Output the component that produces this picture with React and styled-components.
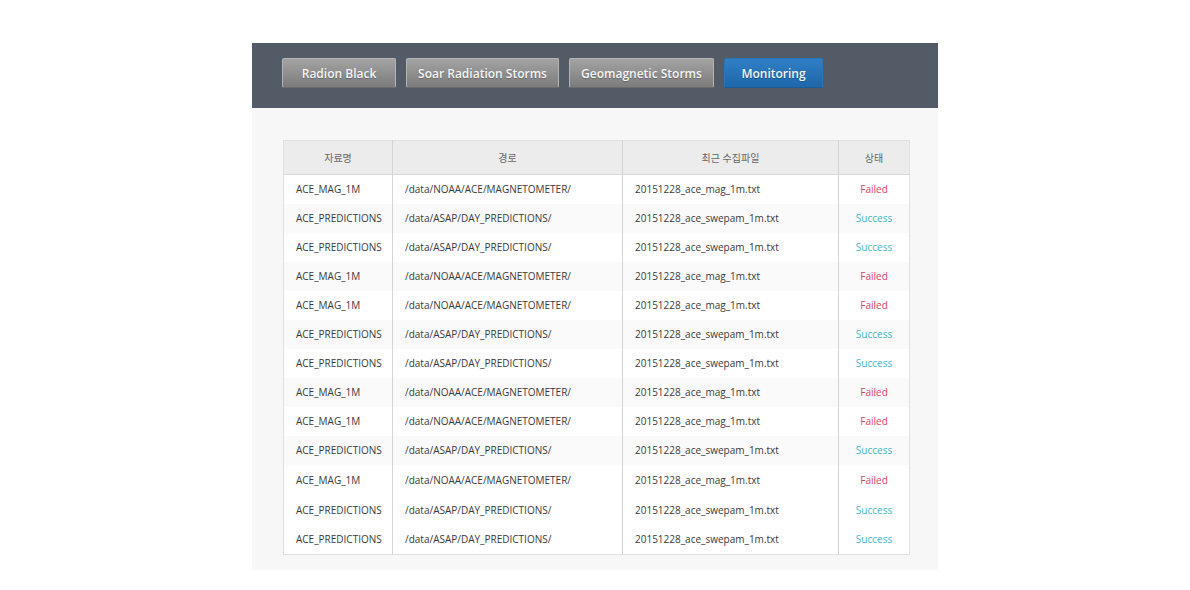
import React from 'react';
import styled, { createGlobalStyle } from 'styled-components';

const GlobalStyle = createGlobalStyle`
  body {
    margin: 0;
    background: #ffffff;
    font-family: "Open Sans", "Noto Sans CJK KR", sans-serif;
  }
`;

const rows = [
  ['ACE_MAG_1M', '/data/NOAA/ACE/MAGNETOMETER/', '20151228_ace_mag_1m.txt', 'Failed'],
  ['ACE_PREDICTIONS', '/data/ASAP/DAY_PREDICTIONS/', '20151228_ace_swepam_1m.txt', 'Success'],
  ['ACE_PREDICTIONS', '/data/ASAP/DAY_PREDICTIONS/', '20151228_ace_swepam_1m.txt', 'Success'],
  ['ACE_MAG_1M', '/data/NOAA/ACE/MAGNETOMETER/', '20151228_ace_mag_1m.txt', 'Failed'],
  ['ACE_MAG_1M', '/data/NOAA/ACE/MAGNETOMETER/', '20151228_ace_mag_1m.txt', 'Failed'],
  ['ACE_PREDICTIONS', '/data/ASAP/DAY_PREDICTIONS/', '20151228_ace_swepam_1m.txt', 'Success'],
  ['ACE_PREDICTIONS', '/data/ASAP/DAY_PREDICTIONS/', '20151228_ace_swepam_1m.txt', 'Success'],
  ['ACE_MAG_1M', '/data/NOAA/ACE/MAGNETOMETER/', '20151228_ace_mag_1m.txt', 'Failed'],
  ['ACE_MAG_1M', '/data/NOAA/ACE/MAGNETOMETER/', '20151228_ace_mag_1m.txt', 'Failed'],
  ['ACE_PREDICTIONS', '/data/ASAP/DAY_PREDICTIONS/', '20151228_ace_swepam_1m.txt', 'Success'],
  ['ACE_MAG_1M', '/data/NOAA/ACE/MAGNETOMETER/', '20151228_ace_mag_1m.txt', 'Failed'],
  ['ACE_PREDICTIONS', '/data/ASAP/DAY_PREDICTIONS/', '20151228_ace_swepam_1m.txt', 'Success'],
  ['ACE_PREDICTIONS', '/data/ASAP/DAY_PREDICTIONS/', '20151228_ace_swepam_1m.txt', 'Success'],
];

const tabs = [
  {label: 'Radion Black', width: 114},
  {label: 'Soar Radiation Storms', width: 153},
  {label: 'Geomagnetic Storms', width: 145},
  {label: 'Monitoring', width: 99, active: true},
];

export default function App() {
  return <>
    <GlobalStyle/>
    <Panel>
      <TopBar>
        {tabs.map(t => <TabBtn key={t.label} $w={t.width} $active={t.active}>{t.label}</TabBtn>)}
      </TopBar>
      <Body>
        <Table>
          <colgroup>
            <col style={{width: 109}}/>
            <col style={{width: 230}}/>
            <col style={{width: 216}}/>
            <col style={{width: 71}}/>
          </colgroup>
          <thead>
            <tr>
              <Th>자료명</Th>
              <Th>경로</Th>
              <Th>최근 수집파일</Th>
              <Th>상태</Th>
            </tr>
          </thead>
          <tbody>
            {rows.map((r, i) => <Row key={i} $tall={i >= 10}>
              <Td>{r[0]}</Td>
              <Td>{r[1]}</Td>
              <Td>{r[2]}</Td>
              <Status $ok={r[3] === 'Success'}>{r[3]}</Status>
            </Row>)}
          </tbody>
        </Table>
      </Body>
    </Panel>
  </>;
}

const Panel = styled.div`
  width: 686px;
  margin: 43px auto 0;
`;

const TopBar = styled.div`
  background: #535b66;
  height: 65px;
  box-sizing: border-box;
  padding: 15px 30px 0;
  display: flex;
  gap: 10px;
  align-items: flex-start;
`;

const TabBtn = styled.div`
  width: ${p => p.$w}px;
  height: 30px;
  box-sizing: border-box;
  display: flex;
  align-items: center;
  justify-content: center;
  white-space: nowrap;
  font-size: 12px;
  font-weight: 600;
  color: #f4f4f4;
  border-radius: 2px;
  text-shadow: 0 1px 1px rgba(0,0,0,0.25);
  background: ${p => p.$active
    ? 'linear-gradient(#2f7fc6, #1f66aa)'
    : 'linear-gradient(#a3a3a3, #7c7c7c)'};
  border: 1px solid ${p => p.$active ? '#2a74b8' : '#b4b4b4'};
  border-bottom-color: ${p => p.$active ? '#1c5c98' : '#6c6c6c'};
`;

const Body = styled.div`
  background: #f7f7f8;
  padding: 32px 28px 15px 31px;
`;

const Table = styled.table`
  width: 626px;
  border-collapse: collapse;
  table-layout: fixed;
  background: #fff;
  border: 1px solid #e0e0e0;
  font-size: 10px;
  color: #3a3a3a;
`;

const Th = styled.th`
  height: 33px;
  padding: 0;
  background: #ececec;
  font-weight: 400;
  color: #666;
  font-size: 10px;
  border-left: 1px solid #d4d4d4;
  border-bottom: 1px solid #d8d8d8;
  &:first-child { border-left: none; }
`;

const Row = styled.tr`
  height: ${p => p.$tall ? '30px' : '29px'};
  background: #fff;
  &:nth-child(even) { background: ${p => p.$tall ? '#fff' : '#fafafa'}; }
`;

const Td = styled.td`
  padding: 0 0 0 12px;
  white-space: nowrap;
  overflow: hidden;
  border-left: 1px solid #d4d4d4;
  &:first-child { border-left: none; }
`;

const Status = styled.td`
  text-align: center;
  border-left: 1px solid #d4d4d4;
  color: ${p => p.$ok ? '#45b8c4' : '#e0436a'};
`;
